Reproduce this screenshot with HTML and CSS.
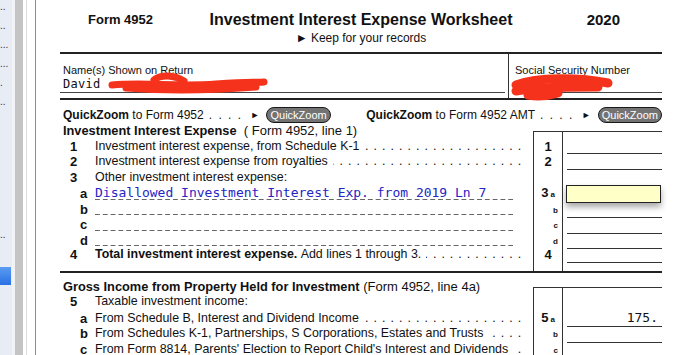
FILE: index.html
```html
<!DOCTYPE html>
<html lang="en">
<head>
    <meta charset="UTF-8">
    <title>Form 4952 - Investment Interest Expense Worksheet</title>
    <link rel="stylesheet" href="styles.css">
</head>
<body>
    <div class="app">
        <div class="sidebar">
            <div class="item">..</div>
            <div class="item">..</div>
            <div class="item">...</div>
            <div class="item">...</div>
            <div class="item">.</div>
            <div class="item">..</div>
            <div class="item"></div>
            <div class="item"></div>
            <div class="item"></div>
            <div class="item"></div>
            <div class="item"></div>
            <div class="item"></div>
            <div class="item">..</div>
            <div class="item"></div>
            <div class="item selected"></div>
            <div class="item"></div>
        </div>
        <div class="splitter"></div>
        <div class="gutter"></div>

        <div class="form">
            <div class="head">
                <div class="form-no">Form 4952</div>
                <div class="title">Investment Interest Expense Worksheet</div>
                <div class="year">2020</div>
            </div>
            <div class="keep">&#9658; Keep for your records</div>

            <div class="names">
                <div class="name-cell">
                    <div class="field">
                        <div class="label">Name(s) Shown on Return</div>
                        <div class="value">David</div>
                    </div>
                </div>
                <div class="ssn-cell">
                    <div class="field">
                        <div class="label">Social Security Number</div>
                        <div class="value"></div>
                    </div>
                </div>
                <svg class="scribble scribble-name" width="165" height="26" viewBox="0 0 165 26">
                    <path d="M6 13 C 40 10, 70 15, 110 12 S 150 11, 158 10" />
                    <path d="M48 8 C 55 2, 68 3, 78 9" />
                    <path d="M20 16 C 60 19, 110 18, 150 15" />
                </svg>
                <svg class="scribble scribble-ssn" width="110" height="30" viewBox="0 0 110 30">
                    <path d="M8 14 C 30 6, 70 6, 100 12" />
                    <path d="M8 20 C 30 16, 60 16, 90 16" />
                    <path d="M20 24 C 30 26, 40 25, 50 22" />
                </svg>
            </div>

            <div class="qz">
                <div class="qz-group">
                    <b>QuickZoom</b>&nbsp;to Form 4952
                    <span class="qz-dots">. . . .</span>
                    <span class="arrow">&#9658;</span>
                    <span class="qz-btn">QuickZoom</span>
                </div>
                <div class="qz-group">
                    <b>QuickZoom</b>&nbsp;to Form 4952 AMT
                    <span class="qz-dots">. . . .</span>
                    <span class="arrow">&#9658;</span>
                    <span class="qz-btn">QuickZoom</span>
                </div>
            </div>

            <div class="section">
                <div class="row heading">
                    <div class="txt"><b class="big">Investment Interest Expense</b>&nbsp;&nbsp;( Form 4952, line 1)</div>
                    <div class="num top"></div>
                    <div class="ent top none"></div>
                </div>
                <div class="row">
                    <div class="txt"><span class="no">1</span>Investment interest expense, from Schedule K-1<span class="lead"></span></div>
                    <div class="num">1</div>
                    <div class="ent"></div>
                </div>
                <div class="row">
                    <div class="txt"><span class="no">2</span>Investment interest expense from royalties<span class="lead"></span></div>
                    <div class="num">2</div>
                    <div class="ent"></div>
                </div>
                <div class="row">
                    <div class="txt"><span class="no">3</span>Other investment interest expense:</div>
                    <div class="num"></div>
                    <div class="ent none"></div>
                </div>
                <div class="row">
                    <div class="txt"><span class="no sub">a</span><span class="fill">Disallowed Investment Interest Exp. from 2019 Ln 7</span></div>
                    <div class="num">3<small>a</small></div>
                    <div class="ent active"></div>
                </div>
                <div class="row">
                    <div class="txt"><span class="no sub">b</span><span class="fill"></span></div>
                    <div class="num right"><small>b</small></div>
                    <div class="ent"></div>
                </div>
                <div class="row">
                    <div class="txt"><span class="no sub">c</span><span class="fill"></span></div>
                    <div class="num right"><small>c</small></div>
                    <div class="ent"></div>
                </div>
                <div class="row">
                    <div class="txt"><span class="no sub">d</span><span class="fill"></span></div>
                    <div class="num right"><small>d</small></div>
                    <div class="ent"></div>
                </div>
                <div class="row">
                    <div class="txt"><span class="no">4</span><b>Total investment interest expense.</b>&nbsp;Add lines 1 through 3.<span class="lead"></span></div>
                    <div class="num">4</div>
                    <div class="ent"></div>
                </div>
                <div class="row spacer">
                    <div class="txt"></div>
                    <div class="num"></div>
                    <div class="ent none"></div>
                </div>
            </div>

            <div class="section second">
                <div class="row heading">
                    <div class="txt"><b class="big">Gross Income from Property Held for Investment</b>&nbsp;(Form 4952, line 4a)</div>
                    <div class="num top"></div>
                    <div class="ent top none"></div>
                </div>
                <div class="row">
                    <div class="txt"><span class="no">5</span>Taxable investment income:</div>
                    <div class="num"></div>
                    <div class="ent none"></div>
                </div>
                <div class="row">
                    <div class="txt"><span class="no sub">a</span>From Schedule B, Interest and Dividend Income<span class="lead"></span></div>
                    <div class="num">5<small>a</small></div>
                    <div class="ent amount">175.</div>
                </div>
                <div class="row">
                    <div class="txt"><span class="no sub">b</span>From Schedules K-1, Partnerships, S Corporations, Estates and Trusts<span class="lead"></span></div>
                    <div class="num right"><small>b</small></div>
                    <div class="ent"></div>
                </div>
                <div class="row">
                    <div class="txt"><span class="no sub">c</span>From Form 8814, Parents' Election to Report Child's Interest and Dividends<span class="lead"></span></div>
                    <div class="num right"><small>c</small></div>
                    <div class="ent"></div>
                </div>
            </div>
        </div>
    </div>
</body>
</html>
```

FILE: styles.css
```css
body {
    margin: 0;
    font-family: "Liberation Sans", Arial, sans-serif;
    font-size: 12px;
    color: #111;
    background: #ffffff;
    overflow: hidden;
}

.app {
    display: flex;
    height: 355px;
}

/* left navigator */
.sidebar {
    width: 12px;
    background: #e8ecf4;
    overflow: hidden;
}

.item {
    height: 19px;
    line-height: 13px;
    font-size: 10px;
    color: #333;
    white-space: nowrap;
}

.item.selected {
    margin-top: 1px;
    height: 18px;
    width: 11px;
    background: linear-gradient(to bottom, #5a9cf2, #2a71e4);
}

.splitter {
    width: 8px;
    border-left: 3px solid #f1f3f6;
    background: #c4c4c4;
}

.gutter {
    width: 12px;
    border-right: 1px solid #8c8c8c;
    background: linear-gradient(to right, #fff 3px, #dcdcdc 3px, #dcdcdc 4px, #fff 4px);
}

/* form */
.form {
    flex: 1;
    padding: 0 11px 0 24px;
}

.head {
    display: grid;
    grid-template-columns: 1fr auto 1fr;
    padding-top: 11px;
    line-height: 18px;
    font-weight: bold;
}

.form-no {
    font-size: 13px;
    padding-left: 28px;
}

.title {
    font-size: 16px;
}

.year {
    font-size: 15px;
    text-align: right;
    padding-right: 42px;
}

.keep {
    text-align: center;
    line-height: 14px;
    margin-top: 2px;
    margin-bottom: 7px;
}

.names {
    position: relative;
    display: grid;
    grid-template-columns: 448px 1fr;
    border-top: 2px solid #222;
    border-bottom: 2px solid #222;
}

.name-cell, .ssn-cell {
    padding-top: 10px;
    padding-bottom: 5px;
}

.name-cell .field {
    margin-right: 3px;
}

.ssn-cell {
    border-left: 1px solid #333;
    padding-left: 3px;
}

.field {
    border-bottom: 1px solid #444;
    padding-left: 3px;
}

.label {
    font-size: 11px;
    line-height: 13px;
}

.value {
    height: 15px;
    line-height: 15px;
    font-family: "DejaVu Sans Mono", "Liberation Mono", monospace;
    font-size: 12px;
    letter-spacing: 0.3px;
}

.scribble {
    position: absolute;
    fill: none;
    stroke: #f5331c;
    stroke-linecap: round;
    stroke-width: 7;
}

.scribble-name {
    left: 46px;
    top: 18px;
}

.scribble-ssn {
    left: 448px;
    top: 17px;
    stroke-width: 9;
}

/* quickzoom bar */
.qz {
    display: flex;
    justify-content: space-between;
    margin-top: 7px;
    padding-left: 3px;
    height: 16px;
    line-height: 16px;
}

.qz-group {
    display: flex;
    align-items: center;
    white-space: nowrap;
}

.qz-dots {
    margin-left: 5px;
    letter-spacing: 1.5px;
}

.arrow {
    font-size: 9px;
    margin-left: 8px;
    margin-right: 7px;
}

.qz-btn {
    height: 14px;
    line-height: 14px;
    padding: 0 3px;
    border: 1px solid #1a1a1a;
    border-radius: 8px;
    background: #737373;
    color: #ffffff;
    font-size: 11px;
}

/* line rows */
.section.second {
    border-top: 2px solid #222;
    padding-top: 6px;
}

.row {
    display: grid;
    grid-template-columns: 473px 30px 99px;
    height: 15.5px;
}

.row.spacer {
    height: 8px;
}

.txt {
    display: flex;
    align-items: center;
    white-space: nowrap;
    overflow: hidden;
    font-size: 12.4px;
    line-height: 15.5px;
}

.heading .txt {
    padding-left: 3px;
    font-size: 13px;
    overflow: visible;
}

.big {
    font-size: 12.8px;
}

.no {
    flex: none;
    width: 25px;
    padding-left: 10px;
    font-weight: bold;
    font-size: 13px;
}

.no.sub {
    width: 15px;
    padding-left: 20px;
}

.lead {
    flex: 1;
    overflow: hidden;
    direction: rtl;
    margin: 0 11px 0 5px;
    letter-spacing: 0.8px;
}

.lead::before {
    content: ". . . . . . . . . . . . . . . . . . . . . . . . . . . . . . . . . . . . . . . . . . . . . . . . . . . . . . . . . . . . . . . . . . . . . . . . . . . . . . . . . . . . . . . . . . . . . . . . . . .";
}

.fill {
    flex: 1;
    align-self: stretch;
    margin-right: 20px;
    font-family: "DejaVu Sans Mono", "Liberation Mono", monospace;
    font-size: 13px;
    color: #2424c4;
    background-image: linear-gradient(to right, #666 5px, transparent 5px);
    background-size: 7.8px 1px;
    background-repeat: repeat-x;
    background-position: 0 calc(100% - 3px);
}

.num {
    border-left: 1px solid #333;
    border-right: 1px solid #333;
    text-align: center;
    font-weight: bold;
    font-size: 13px;
    line-height: 15.5px;
}

.num small {
    font-size: 8px;
    margin-left: 2px;
}

.num.right {
    text-align: right;
    padding-right: 4px;
}

.num.top, .ent.top {
    margin-top: 8px;
    border-top: 1px solid #333;
}

.ent {
    margin-left: 4px;
    border-bottom: 1px solid #333;
}

.ent.none {
    border-bottom: none;
}

.ent.top {
    margin-left: 0;
}

.ent.active {
    margin-left: 3px;
    margin-right: 1px;
    border: 1px solid #222;
    background: #ffffc8;
    box-shadow: 0 4px 6px rgba(0, 0, 0, 0.35);
}

.ent.amount {
    font-family: "DejaVu Sans Mono", "Liberation Mono", monospace;
    font-size: 13px;
    text-align: right;
    padding-right: 4px;
    line-height: 16px;
}
```
